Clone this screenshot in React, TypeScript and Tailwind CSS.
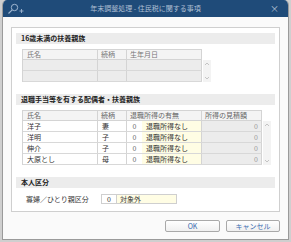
import React from "react";

const ROWS = [
  { name: "洋子", rel: "妻" },
  { name: "洋明", rel: "子" },
  { name: "伸介", rel: "子" },
  { name: "大原とし", rel: "母" },
];

function SectionHeader({ children }: { children: React.ReactNode }) {
  return (
    <div className="h-[11px] bg-[#ececec] flex items-center pl-[5px] text-[7px] font-bold text-[#222] leading-none">
      {children}
    </div>
  );
}

function Scroll({ h }: { h: string }) {
  return (
    <div className={`w-[8px] ${h} bg-[#f3f3f3] flex flex-col justify-between items-center py-[2px] text-[#b8b8b8]`}>
      <svg width="6" height="4" viewBox="0 0 6 4"><path d="M1 3 L3 1 L5 3" fill="none" stroke="currentColor" strokeWidth="0.8" /></svg>
      <svg width="6" height="4" viewBox="0 0 6 4"><path d="M1 1 L3 3 L5 1" fill="none" stroke="currentColor" strokeWidth="0.8" /></svg>
    </div>
  );
}

const cell = "h-full border-r border-[#d4d4d4] flex items-center text-[7px] leading-none";

export default function App() {
  return (
    <div className="w-[291px] h-[242px] bg-[#cfcfcf] pl-[2px] pr-[2px] font-['Noto_Sans_CJK_JP','Noto_Sans',sans-serif]">
      <div className="w-[287px] h-[240px] bg-[#fafafa] rounded-t-[5px] overflow-hidden border-x border-b border-[#9a9a9a] flex flex-col">
        {/* タイトルバー */}
        <div className="h-[17px] bg-[#1f4b79] flex items-center px-[4px] relative shrink-0">
          <svg width="18" height="12" viewBox="0 0 18 12" className="text-[#9fb6d0]">
            <circle cx="7.5" cy="4.5" r="3.2" fill="none" stroke="currentColor" strokeWidth="1" />
            <path d="M5.2 6.8 L1.5 10.5" stroke="currentColor" strokeWidth="1.2" />
            <path d="M12.5 8 H16.5 M14.5 6 V10" stroke="currentColor" strokeWidth="0.9" />
          </svg>
          <div className="absolute inset-0 flex items-center justify-center text-[7px] text-[#aebfd3] leading-none">
            年末調整処理 - 住民税に関する事項
          </div>
          <div className="ml-auto mr-[5px] text-[#b7c5d6] text-[9px] leading-none">×</div>
        </div>

        {/* 本体 */}
        <div className="flex-1 px-[8px] pt-[10px] flex flex-col">
          <div className="h-[185px] border border-[#cfcfcf] bg-white px-[4px] pt-[5px] flex flex-col">
            <SectionHeader>16歳未満の扶養親族</SectionHeader>

            <div className="flex ml-[6px] mt-[5px]">
              <div className="border-l border-t border-[#d4d4d4]">
                <div className="flex h-[10px] bg-[#f4f4f4] border-b border-[#d4d4d4] text-[#777]">
                  <div className={`${cell} w-[75px] pl-[4px]`}>氏名</div>
                  <div className={`${cell} w-[29px] pl-[3px]`}>続柄</div>
                  <div className={`${cell} w-[75px] pl-[3px]`}>生年月日</div>
                </div>
                {[0, 1].map((i) => (
                  <div key={i} className="flex h-[11px] bg-[#ececec] border-b border-[#d8d8d8]">
                    <div className={`${cell} w-[75px]`} />
                    <div className={`${cell} w-[29px]`} />
                    <div className={`${cell} w-[75px]`} />
                  </div>
                ))}
              </div>
              <div className="pt-[11px] ml-[1px]">
                <Scroll h="h-[22px]" />
              </div>
            </div>

            <div className="mt-[12px]">
              <SectionHeader>退職手当等を有する配偶者・扶養親族</SectionHeader>
            </div>

            <div className="flex ml-[6px] mt-[5px]">
              <div className="border-l border-t border-[#d4d4d4]">
                <div className="flex h-[10px] bg-[#f4f4f4] border-b border-[#d4d4d4] text-[#666]">
                  <div className={`${cell} w-[75px] pl-[4px]`}>氏名</div>
                  <div className={`${cell} w-[29px] pl-[3px]`}>続柄</div>
                  <div className={`${cell} w-[75px] pl-[3px]`}>退職所得の有無</div>
                  <div className={`${cell} w-[60px] pl-[3px]`}>所得の見積額</div>
                </div>
                {ROWS.map((r) => (
                  <div key={r.name} className="flex h-[11px] border-b border-[#d8d8d8] bg-white">
                    <div className={`${cell} w-[75px] pl-[4px] text-[#333]`}>{r.name}</div>
                    <div className={`${cell} w-[29px] pl-[4px] text-[#333]`}>{r.rel}</div>
                    <div className="h-full w-[15px] flex items-center justify-center text-[7px] text-[#666] leading-none">0</div>
                    <div className={`${cell} w-[60px] pl-[4px] bg-[#fffde4] text-[#333]`}>退職所得なし</div>
                    <div className={`${cell} w-[60px] justify-end pr-[3px] bg-[#ececec] text-[#999]`}>0</div>
                  </div>
                ))}
              </div>
              <div className="pt-[11px] ml-[1px]">
                <Scroll h="h-[44px]" />
              </div>
            </div>

            <div className="mt-[12px]">
              <SectionHeader>本人区分</SectionHeader>
            </div>

            <div className="flex items-center mt-[6px] ml-[10px]">
              <div className="w-[75px] text-[7px] text-[#333] leading-none">寡婦／ひとり親区分</div>
              <div className="flex h-[10px] border border-[#cfcfcf]">
                <div className="w-[15px] border-r border-[#cfcfcf] bg-white flex items-center justify-center text-[7px] text-[#333] leading-none">0</div>
                <div className="w-[59px] bg-[#fffde4] flex items-center pl-[3px] text-[7px] text-[#333] leading-none">対象外</div>
              </div>
            </div>
          </div>

          <div className="flex justify-end gap-[6px] mt-[8px] pr-[0px]">
            <button className="w-[55px] h-[12px] rounded-[2px] border border-[#a9a9a9] bg-gradient-to-b from-white to-[#f0f0f0] text-[7px] text-[#3a6db0] leading-none flex items-center justify-center">
              OK
            </button>
            <button className="w-[54px] h-[12px] rounded-[2px] border border-[#a9a9a9] bg-gradient-to-b from-white to-[#f0f0f0] text-[7px] text-[#3a6db0] leading-none flex items-center justify-center">
              キャンセル
            </button>
          </div>
        </div>
      </div>
    </div>
  );
}
